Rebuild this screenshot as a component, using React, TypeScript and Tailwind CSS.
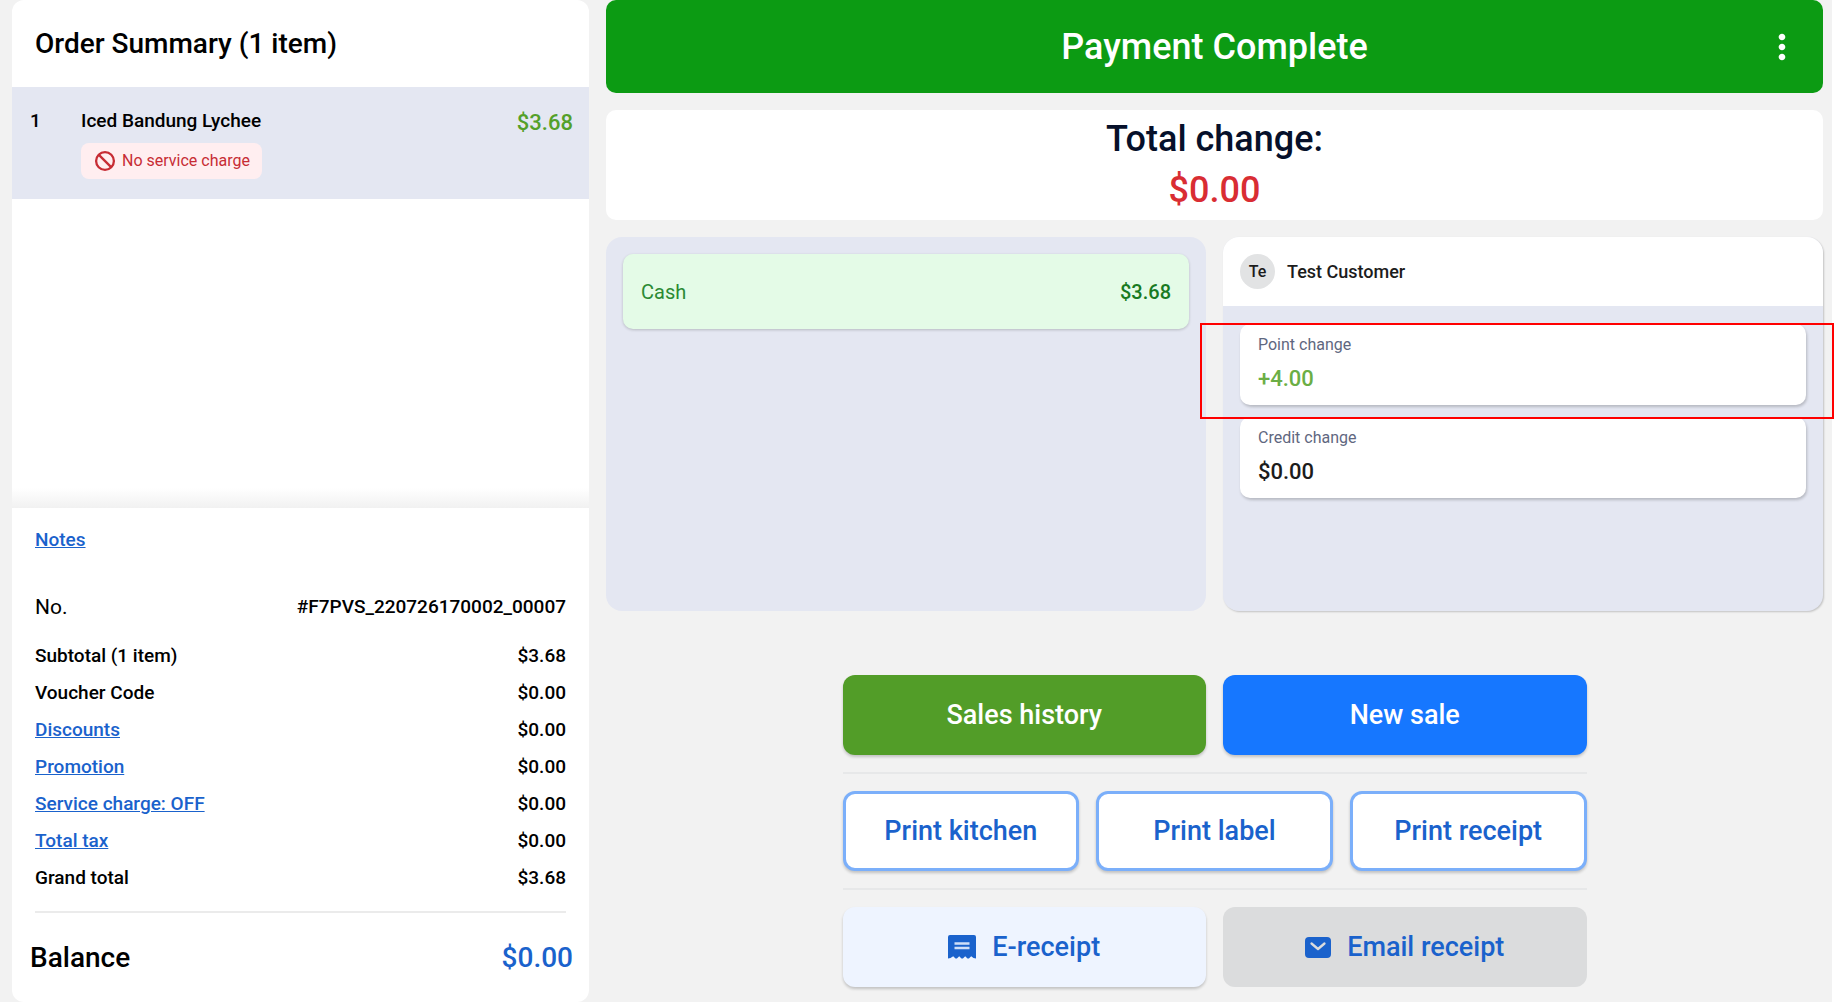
import { useState } from "react";
import { MdMoreVert } from "react-icons/md";

type Row = { label: string; value: string; link?: boolean };

const rows: Row[] = [
  { label: "Subtotal (1 item)", value: "$3.68" },
  { label: "Voucher Code", value: "$0.00" },
  { label: "Discounts", value: "$0.00", link: true },
  { label: "Promotion", value: "$0.00", link: true },
  { label: "Service charge: OFF", value: "$0.00", link: true },
  { label: "Total tax", value: "$0.00", link: true },
  { label: "Grand total", value: "$3.68" },
];

const prints = ["Print kitchen", "Print label", "Print receipt"];

const BlockIcon = () => (
  <svg viewBox="0 0 24 24" className="size-6" fill="none" stroke="currentColor" strokeWidth="2.3" aria-hidden="true">
    <circle cx="12" cy="12" r="8.9" />
    <path d="M5.6 5.6 18.4 18.4" />
  </svg>
);

const ReceiptIcon = () => (
  <svg viewBox="0 0 28 24" className="h-6 w-7" aria-hidden="true">
    <path fill="currentColor" d="M2 0h24a2 2 0 0 1 2 2v21.500l-2.500-.5-2.300-1.700-2.300 2.200h-1.400l-2.300-2.200-2.300 2.200h-1.400l-2.300-2.200-2.300 2.200H7.500l-2.300-2.200L2.500 23 0 23.500V2a2 2 0 0 1 2-2z" />
    <path stroke="#cfdff8" strokeWidth="2.600" d="M6.500 8.500h15M6.500 13h15" />
  </svg>
);

const MailIcon = () => (
  <svg viewBox="0 0 26 21" className="h-[21px] w-[26px]" aria-hidden="true">
    <rect width="26" height="21" rx="4" fill="currentColor" />
    <path fill="none" stroke="#dbdcdd" strokeWidth="2.300" strokeLinecap="round" strokeLinejoin="round" d="M6.500 6.500l6.500 5.500 6.500-5.500" />
  </svg>
);

function OrderSummary() {
  return (
    <aside className="flex w-[577px] shrink-0 flex-col overflow-hidden rounded-xl bg-white">
      <h1 className="px-[23px] pt-[26px] pb-[25px] text-[28px] leading-9 font-medium">Order Summary (1 item)</h1>
      <div className="flex h-28 items-start bg-[#e4e7f2] pt-5 pr-4 pl-[18px] text-[19px] leading-7 font-medium">
        <span className="w-[51px]">1</span>
        <div className="flex flex-1 flex-col items-start gap-2">
          <span>Iced Bandung Lychee</span>
          <span className="flex h-9 items-center gap-[5px] rounded-lg bg-[#ffeef0] px-3 text-base font-normal text-[#c72c34]">
            <BlockIcon /> No service charge
          </span>
        </div>
        <span className="pt-0.5 text-[22px] text-[#54a02a]">$3.68</span>
      </div>
      <div className="flex-1" />
      <div className="h-5 bg-linear-to-b from-white to-[#f1f1f1]" />
      <div className="px-[23px] pt-[18px] text-[19px] leading-7 font-medium">
        <a href="#notes" className="block w-fit text-[#1a62cc] underline">Notes</a>
        <div className="mt-[39px] mb-4 flex items-center justify-between">
          <span className="text-[21px] font-normal">No.</span>
          <span>#F7PVS_220726170002_00007</span>
        </div>
        <table className="w-full">
          <tbody>
            {rows.map((r) => (
              <tr key={r.label} className="h-[37px]">
                <th scope="row" className="p-0 text-left align-middle font-medium">
                  {r.link ? <a href="#adjust" className="text-[#1a62cc] underline">{r.label}</a> : r.label}
                </th>
                <td className="p-0 text-right align-middle">{r.value}</td>
              </tr>
            ))}
          </tbody>
        </table>
        <hr className="mt-[15px] border-t-2 border-[#ebebeb]" />
      </div>
      <div className="flex items-center justify-between pt-[27px] pr-4 pb-[26px] pl-[18px] text-[28px] leading-9 font-medium">
        <span>Balance</span>
        <span className="text-[#1a62cc]">$0.00</span>
      </div>
    </aside>
  );
}

function ChangeCard({ label, value, color }: { label: string; value: string; color: string }) {
  return (
    <div className="flex h-[81px] flex-col gap-2 rounded-[10px] bg-white px-[18px] pt-[9px] shadow-[1px_2px_3px_rgba(0,0,0,0.2)]">
      <span className="text-base text-[#5f6780]">{label}</span>
      <span className={`text-[22px] leading-7 font-medium ${color}`}>{value}</span>
    </div>
  );
}

function CustomerPanel() {
  return (
    <section className="rounded-2xl bg-[#e4e7f2] shadow-[1px_1px_2px_rgba(0,0,0,0.2)]">
      <div className="flex h-[69px] items-center gap-3 rounded-t-2xl bg-white px-[17px] text-lg font-medium text-[#1c1c1c]">
        <span className="flex size-[35px] items-center justify-center rounded-full bg-[#e2e3e4] text-base">Te</span>
        Test Customer
      </div>
      <div className="relative flex flex-col gap-3 px-[17px] pt-[18px]">
        <ChangeCard label="Point change" value="+4.00" color="text-[#6bae45]" />
        <ChangeCard label="Credit change" value="$0.00" color="text-[#1c1c1c]" />
        <div className="pointer-events-none absolute top-[17px] -right-[11px] -left-[23px] h-24 border-2 border-[#ff0000]" />
      </div>
    </section>
  );
}

export default function App() {
  const [menuOpen, setMenuOpen] = useState(false);
  const action = "flex h-20 flex-1 items-center justify-center gap-4 rounded-xl text-[27px] font-medium";
  const raised = "shadow-[0_2px_3px_rgba(0,0,0,0.2)]";

  return (
    <div className="flex min-h-screen gap-[17px] border-r-5 border-white bg-[#f2f2f2] pr-[9px] pl-3 font-['Roboto',sans-serif] text-black">
      <OrderSummary />
      <main className="flex min-w-0 flex-1 flex-col">
        <header className="relative flex h-[93px] items-center justify-center rounded-[10px] bg-[#0c9b13] text-white">
          <h2 className="text-4xl font-medium">Payment Complete</h2>
          <button aria-label="More options" aria-expanded={menuOpen} onClick={() => setMenuOpen(!menuOpen)}
            className="absolute right-[21px]">
            <MdMoreVert className="size-10" />
          </button>
        </header>
        <div className="mt-[17px] flex h-[110px] flex-col items-center rounded-[10px] bg-white pt-1 text-4xl font-medium text-[#06102a]">
          <p className="leading-[51px]">Total change:</p>
          <p className="leading-[51px] text-[#d92d33]">$0.00</p>
        </div>
        <div className="mt-[17px] grid h-[374px] grid-cols-2 gap-[17px]">
          <section className="rounded-2xl bg-[#e4e7f2] p-[17px]">
            <div className="flex h-[75px] items-center justify-between rounded-[10px] bg-[#e4fbe7] px-[18px] text-xl text-[#2b8a34] shadow-[0_1px_3px_rgba(0,0,0,0.2)]">
              <span>Cash</span>
              <span className="font-medium text-[#187a22]">$3.68</span>
            </div>
          </section>
          <CustomerPanel />
        </div>
        <div className="mx-auto mt-16 mb-[15px] flex w-[744px] flex-col gap-[17px]">
          <div className="flex gap-[17px]">
            <button className={`${action} ${raised} bg-[#529d28] text-white`}>Sales history</button>
            <button className={`${action} ${raised} bg-[#1677ff] text-white`}>New sale</button>
          </div>
          <hr className="border-t-2 border-[#e7e8e9]" />
          <div className="flex gap-[17px]">
            {prints.map((p) => (
              <button key={p} className={`${action} ${raised} border-3 border-[#7baffa] bg-white text-[#1a62cc]`}>{p}</button>
            ))}
          </div>
          <hr className="border-t-2 border-[#e7e8e9]" />
          <div className="flex gap-[17px]">
            <button className={`${action} ${raised} bg-[#eef4ff] text-[#1a62cc]`}><ReceiptIcon /> E-receipt</button>
            <button className={`${action} bg-[#dbdcdd] text-[#1a62cc]`}><MailIcon /> Email receipt</button>
          </div>
        </div>
      </main>
    </div>
  );
}
